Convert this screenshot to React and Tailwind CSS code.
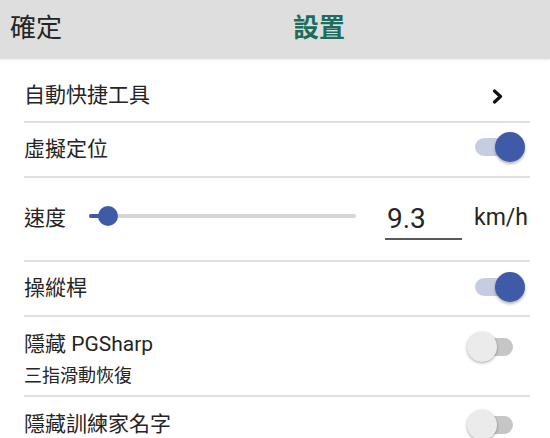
import React from "react";

const font = { fontFamily: 'Roboto, "Noto Sans CJK TC", sans-serif' };

function Switch({ on }) {
  return (
    <div className="relative w-[58px] h-[30px] shrink-0">
      <div className={`absolute left-[8px] top-[6px] w-[38px] h-[18px] rounded-full ${on ? "bg-[#c6cce2]" : "bg-[#c6c6c6]"}`}></div>
      <div
        className={`absolute top-0 w-[30px] h-[30px] rounded-full ${
          on ? "right-0 bg-[#3f5ba8] shadow-[0_2px_3px_rgba(0,0,0,0.3)]" : "left-0 bg-[#ebebeb] shadow-[0_1px_3px_rgba(0,0,0,0.35)]"
        }`}
      ></div>
    </div>
  );
}

function Divider() {
  return <div className="ml-[24px] w-[506px] h-[2px] bg-[#e0e0e0]"></div>;
}

export default function App() {
  return (
    <div className="w-[550px] h-[438px] bg-white overflow-hidden text-[#252525]" style={font}>
      {/* barra superior */}
      <div className="h-[59px] bg-[#dedede] flex items-center pl-[10px] pb-[4px] shadow-[0_1px_2px_rgba(0,0,0,0.08)]">
        <span className="text-[26px] leading-none">確定</span>
        <span className="ml-[231px] text-[26px] leading-none font-bold text-[#1d6d5c]">設置</span>
      </div>

      <div className="h-[62px] flex items-center justify-between pl-[24px] pr-[46px] pt-[12px]">
        <span className="text-[21px]">自動快捷工具</span>
        <svg width="13" height="15" viewBox="0 0 13 15" fill="none" stroke="#111" strokeWidth="3.2" strokeLinecap="round" strokeLinejoin="round">
          <path d="M3.5 2l6 5.5-6 5.5" />
        </svg>
      </div>
      <Divider />

      <div className="h-[53px] flex items-center justify-between pl-[24px] pr-[25px]">
        <span className="text-[21px]">虛擬定位</span>
        <div className="mb-[6px]">
          <Switch on />
        </div>
      </div>
      <Divider />

      <div className="h-[82px] flex items-center pl-[24px] pr-[22px]">
        <span className="text-[21px]">速度</span>
        <div className="relative ml-[23px] w-[267px] h-[20px] mb-[6px]">
          <div className="absolute left-0 right-0 top-[8px] h-[4px] bg-[#d6d6d6] rounded-full"></div>
          <div className="absolute left-0 w-[19px] top-[8px] h-[4px] bg-[#3f5ba8] rounded-full"></div>
          <div className="absolute left-[9px] top-0 w-[20px] h-[20px] rounded-full bg-[#3f5ba8]"></div>
        </div>
        <div className="ml-[29px] w-[77px] border-b-[2px] border-[#5a5a5a] pt-[6px] pb-[4px] pl-[2px] text-[28px] leading-[30px]">9.3</div>
        <span className="ml-[12px] text-[23px] mb-[2px]">km/h</span>
      </div>
      <Divider />

      <div className="h-[53px] flex items-center justify-between pl-[24px] pr-[25px]">
        <span className="text-[21px]">操縱桿</span>
        <div className="mb-[4px]">
          <Switch on />
        </div>
      </div>
      <Divider />

      <div className="h-[78px] flex items-center justify-between pl-[24px] pr-[25px] pt-[8px]">
        <div className="flex flex-col">
          <span className="text-[21px] leading-[32px]">隱藏 PGSharp</span>
          <span className="text-[18px] leading-[32px]">三指滑動恢復</span>
        </div>
        <div className="mb-[26px]">
          <Switch />
        </div>
      </div>
      <Divider />

      <div className="h-[56px] flex items-center justify-between pl-[24px] pr-[25px]">
        <span className="text-[21px]">隱藏訓練家名字</span>
        <Switch />
      </div>
    </div>
  );
}
